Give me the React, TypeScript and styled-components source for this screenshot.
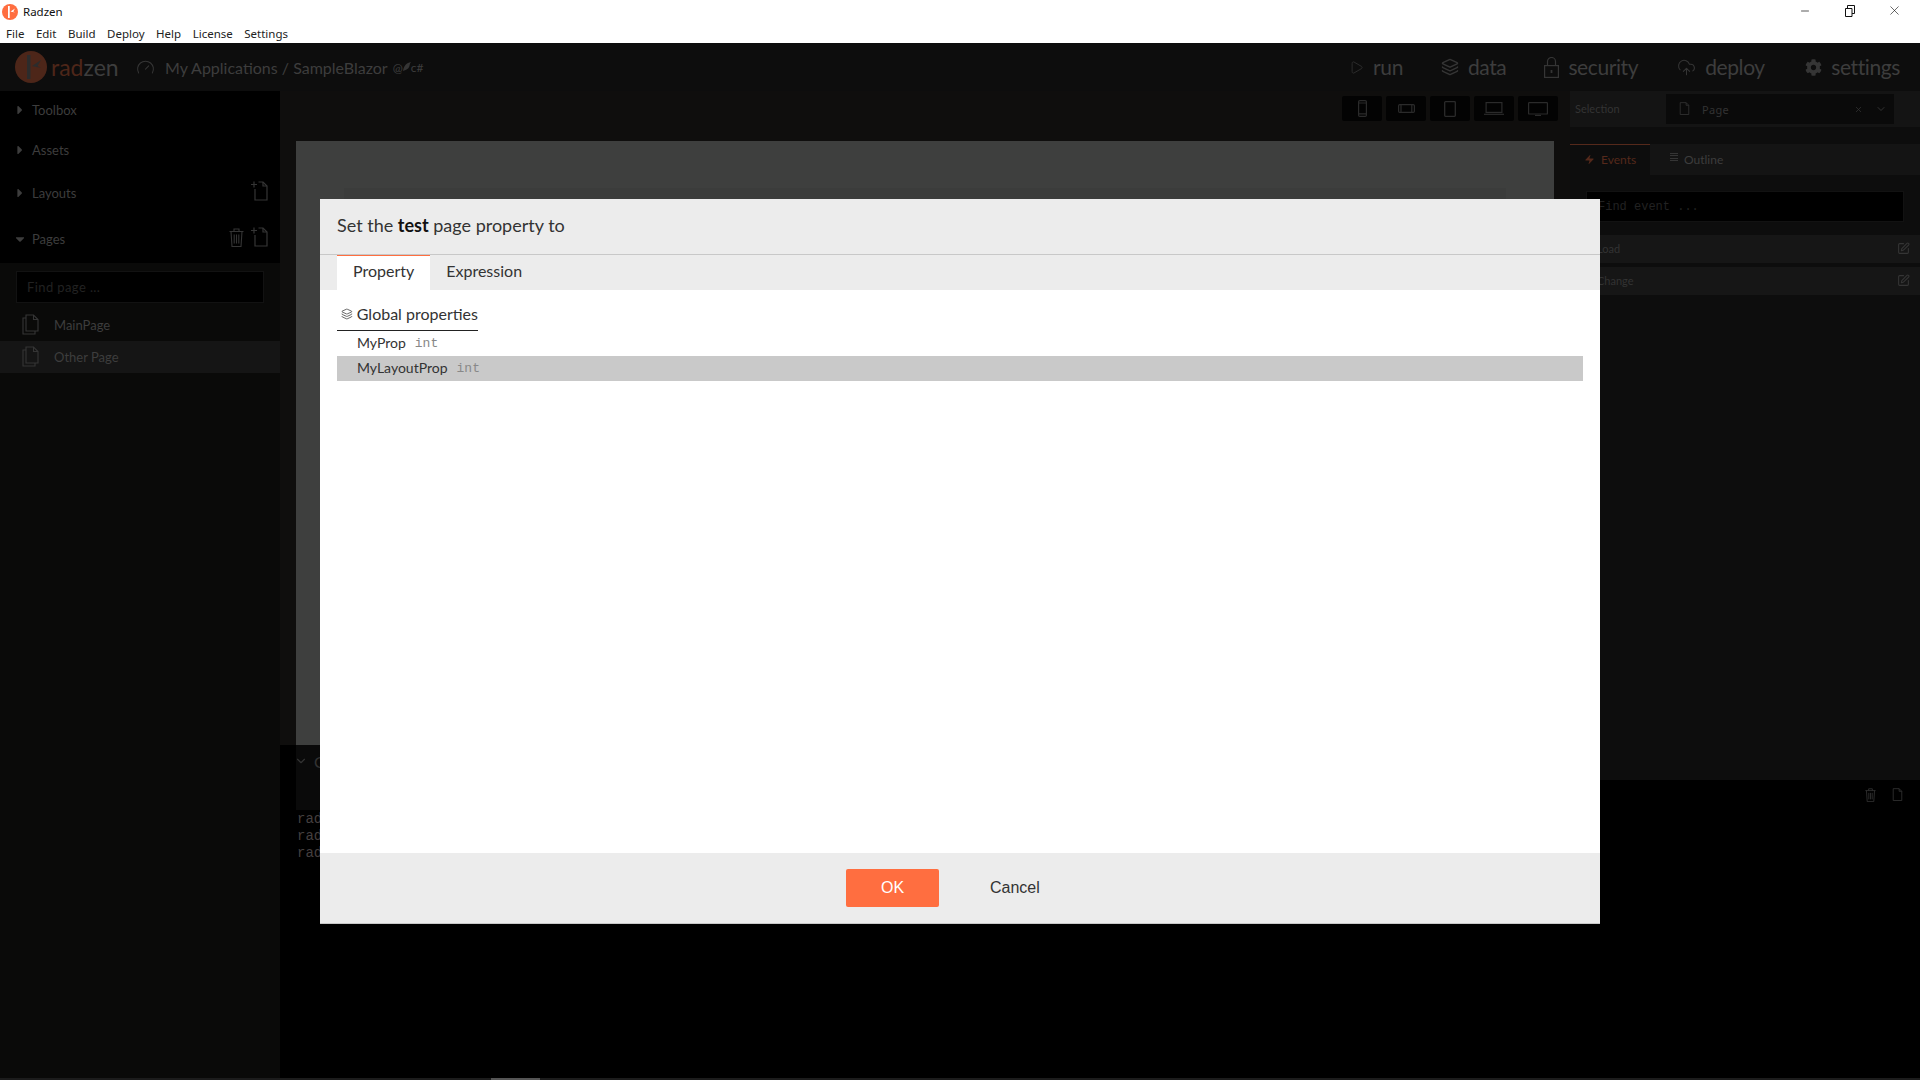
import React from 'react';
import styled, { createGlobalStyle } from 'styled-components';
import { Play, Layers, CloudUpload, Zap, SquarePen, X, ChevronDown, Minus, Gauge } from 'lucide-react';
import { FaCog, FaCaretRight, FaCaretDown } from 'react-icons/fa';

const dimText = '#3d3d3d';
const dimIcon = '#353535';
const deviceIcon = '#2b2b2b';

const GlobalStyle = createGlobalStyle`
  html, body { margin: 0; padding: 0; background: #000; overflow: hidden; }
  * { box-sizing: border-box; }
`;

const FileIcon = ({ size = 16, color = dimIcon }: { size?: number; color?: string }): React.JSX.Element => (
  <svg width={size} height={size * 1.2} viewBox="0 0 16 20" fill="none" stroke={color} strokeWidth="1.2">
    <path d="M1.5 1h9l4 4v14h-13z" />
    <path d="M10.5 1v4h4" />
  </svg>
);

const NewFileIcon = (): React.JSX.Element => (
  <svg width="17" height="20" viewBox="0 0 17 20" fill="none" stroke={dimIcon} strokeWidth="1.2">
    <path d="M0 3.5h6M3 .5v6" />
    <path d="M4 8v11h12V5l-4-4H7.5" />
    <path d="M12 1v4h4" />
  </svg>
);

const TrashIcon = ({ w = 15, h = 19 }: { w?: number; h?: number }): React.JSX.Element => (
  <svg width={w} height={h} viewBox="0 0 15 19" fill="none" stroke={dimIcon} strokeWidth="1.1">
    <path d="M.5 3.5h14M5 3.5V1h5v2.5" />
    <path d="M2 3.5l1 15h9l1-15" />
    <path d="M5.2 6.5v9M7.5 6.5v9M9.8 6.5v9" />
  </svg>
);

const PagesIcon = (): React.JSX.Element => (
  <svg width="17" height="21" viewBox="0 0 17 21" fill="none" stroke={dimIcon} strokeWidth="1.1">
    <path d="M4 1h7.5L16 5.5V17H4z" />
    <path d="M11.5 1v4.5H16" />
    <path d="M4 4H1v16h12v-3" />
  </svg>
);

const LockIcon = (): React.JSX.Element => (
  <svg width="15" height="21" viewBox="0 0 15 21" fill="none" stroke={dimIcon} strokeWidth="1.2">
    <rect x=".6" y="8.6" width="13.8" height="11.8" />
    <path d="M3.5 8.5V4.5a4 4 0 018 0v4" />
    <path d="M7.5 13v3" strokeWidth="1.8" />
  </svg>
);

const RadzenLogo = ({ size, bg, mark }: { size: number; bg: string; mark: string }): React.JSX.Element => (
  <svg width={size} height={size} viewBox="0 0 32 32">
    <circle cx="16" cy="16" r="16" fill={bg} />
    <path d="M12 4h3.5v24H12z" fill={mark} />
    <path d="M17 15l9-6-3.5 6 3.5 2z" fill={mark} />
  </svg>
);

const PhoneIcon = (): React.JSX.Element => (
  <svg width="9" height="17" viewBox="0 0 9 17" fill="none" stroke={deviceIcon} strokeWidth="1.2">
    <rect x=".6" y=".6" width="7.8" height="15.8" rx="1.2" />
    <path d="M.6 3h7.8M.6 13.8h7.8" />
  </svg>
);

const PhoneWideIcon = (): React.JSX.Element => (
  <svg width="17" height="9" viewBox="0 0 17 9" fill="none" stroke={deviceIcon} strokeWidth="1.2">
    <rect x=".6" y=".6" width="15.8" height="7.8" rx="1.2" />
    <path d="M3 .6v7.8M13.8 .6v7.8" />
  </svg>
);

const TabletIcon = (): React.JSX.Element => (
  <svg width="12" height="16" viewBox="0 0 12 16" fill="none" stroke={deviceIcon} strokeWidth="1.3">
    <rect x=".7" y=".7" width="10.6" height="14.6" rx=".8" />
  </svg>
);

const LaptopIcon = (): React.JSX.Element => (
  <svg width="20" height="13" viewBox="0 0 20 13" fill="none" stroke={deviceIcon} strokeWidth="1.2">
    <rect x="2.1" y=".6" width="15.8" height="9.8" />
    <path d="M0 12.3h20" />
  </svg>
);

const MonitorIcon = (): React.JSX.Element => (
  <svg width="20" height="14" viewBox="0 0 20 14" fill="none" stroke={deviceIcon} strokeWidth="1.2">
    <rect x=".6" y=".6" width="18.8" height="11.4" rx=".6" />
    <path d="M7 13.4h6" />
  </svg>
);

const TitleBar = styled.div`
  height: 24px;
  background: #fff;
  display: flex;
  align-items: center;
  padding: 0 3px 0 2px;
  font: 11.5px 'Noto Sans', sans-serif;
  color: #111;
`;

const TitleText = styled.span`
  flex: 1;
  position: relative;
  top: -1px;
  margin-left: 5px;
`;

const WindowButton = styled.div`
  width: 45px;
  height: 24px;
  padding-bottom: 3px;
  display: flex;
  align-items: center;
  justify-content: center;
  color: #111;
`;

const RestoreIcon = (): React.JSX.Element => (
  <svg width="10" height="12" viewBox="0 0 10 12" fill="none" stroke="#111">
    <path d="M.5 3.5h6.5v8H.5zM2.5 3.5V.5h7v8H7" />
  </svg>
);

const MenuBar = styled.div`
  height: 19px;
  background: #fff;
  display: flex;
  align-items: center;
  gap: 11.5px;
  padding: 0 0 1px 6px;
  font: 11.5px 'Noto Sans', sans-serif;
  color: #222;
`;

const Header = styled.div`
  height: 48px;
  background: #0d0d0d;
  display: flex;
  align-items: center;
  padding-left: 15px;
  font-family: Lato, sans-serif;
  color: ${dimText};
`;

const Brand = styled.div`
  display: flex;
  align-items: center;
  gap: 4px;
  font-size: 23px;
  width: 121px;
`;

const BrandAccent = styled.span`
  color: #4d2619;
`;

const Breadcrumb = styled.div`
  display: flex;
  align-items: center;
  gap: 10px;
  font-size: 16px;
  flex: 1;
`;

const TechMark = styled.span`
  display: flex;
  align-items: center;
  font-size: 12px;
  margin-left: -5px;
`;

const HeaderNav = styled.div`
  display: flex;
  align-items: center;
  gap: 38px;
  padding-right: 20px;
`;

const NavItem = styled.div<{ $lead?: number }>`
  display: flex;
  align-items: center;
  gap: 9px;
  margin-left: ${(p) => p.$lead ?? 0}px;
  font-size: 21px;
  line-height: 48px;
  letter-spacing: -0.4px;
`;

const Workspace = styled.div`
  flex: 1;
  display: flex;
  min-height: 0;
`;

const Sidebar = styled.div`
  width: 280px;
  background: #0a0a09;
  font-family: Lato, sans-serif;
  color: ${dimText};
`;

const SidebarTop = styled.div`
  background: #000;
`;

const Section = styled.div<{ $h: number }>`
  height: ${(p) => p.$h}px;
  display: flex;
  align-items: center;
  padding: 0 12px 0 13px;
  gap: 5px;
  font-size: 13px;
`;

const SectionTitle = styled.span`
  flex: 1;
`;

const SectionActions = styled.div`
  display: flex;
  align-items: center;
  gap: 7px;
  margin-top: -4px;
`;

const FindInput = styled.div`
  background: #000;
  border: 1px solid #121212;
  color: #222;
  height: 32px;
  display: flex;
  align-items: center;
`;

const SideFind = styled(FindInput)`
  margin: 8px 16px 6px;
  padding-left: 10px;
  font-size: 13px;
  letter-spacing: 0.4px;
`;

const PageRow = styled.div<{ $active?: boolean }>`
  height: 32px;
  display: flex;
  align-items: center;
  gap: 15px;
  padding: 0 0 1px 22px;
  font-size: 13px;
  background: ${(p) => (p.$active ? '#151515' : 'transparent')};
`;

const Center = styled.div`
  flex: 1;
  display: flex;
  flex-direction: column;
  background: #0f0e0d;
`;

const DeviceBar = styled.div`
  height: 50px;
  display: flex;
  justify-content: flex-end;
  gap: 4px;
  padding: 5px 12px 0 0;
`;

const DeviceButton = styled.div`
  width: 40px;
  height: 25px;
  background: #030303;
  border-radius: 2px;
  display: flex;
  align-items: center;
  justify-content: center;
`;

const Canvas = styled.div`
  height: 604px;
  margin: 0 16px;
  background: #3e3f3e;
  padding: 47px 48px 0;
`;

const CanvasInner = styled.div`
  height: 100%;
  background: #3b3c3b;
`;

const Output = styled.div`
  flex: 1;
  background: #000;
  padding-left: 16px;
`;

const OutputHead = styled.div`
  height: 65px;
  margin-bottom: 1px;
  background: #0a0a0a;
  padding: 7px 0 0;
  display: flex;
  gap: 6px;
  color: #333;
  font: 16px Lato, sans-serif;
`;

const OutputChevron = styled(ChevronDown)`
  margin: 2px 0 0 -2px;
`;

const LogLine = styled.div`
  font: 14px/17px 'Liberation Mono', monospace;
  color: #443f3f;
  padding-left: 1px;
`;

const Inspector = styled.div`
  width: 350px;
  display: flex;
  flex-direction: column;
  font-family: Lato, sans-serif;
  color: ${dimText};
`;

const InspectorMain = styled.div`
  height: 689px;
  background: #0d0d0d;
`;

const SelectionRow = styled.div`
  height: 36px;
  background: #141414;
  display: flex;
  align-items: center;
  padding-left: 5px;
  font-size: 11px;
  color: #333;
`;

const SelectionLabel = styled.span`
  width: 91px;
  padding-bottom: 2px;
`;

const SelectBox = styled.div`
  width: 228px;
  height: 30px;
  background: #0a0a0a;
  display: flex;
  align-items: center;
  gap: 12px;
  padding: 0 7px 0 13px;
  font-family: 'Noto Sans', sans-serif;
`;

const SelectValue = styled.span`
  flex: 1;
  letter-spacing: 0.3px;
`;

const InspectorTabs = styled.div`
  margin-top: 17px;
  height: 31px;
  background: #141414;
  display: flex;
  font-size: 12px;
`;

const InspectorTab = styled.div<{ $active?: boolean }>`
  width: ${(p) => (p.$active ? '80px' : 'auto')};
  display: flex;
  align-items: center;
  gap: 6px;
  padding: 0 0 1px ${(p) => (p.$active ? '14px' : '20px')};
  color: ${(p) => (p.$active ? '#55291b' : dimText)};
  background: ${(p) => (p.$active ? '#0d0d0d' : 'transparent')};
  border-top: ${(p) => (p.$active ? '1px solid #55291b' : 'none')};
`;

const OutlineGlyph = styled.span`
  width: 8px;
  height: 9px;
  margin-top: -4px;
  background: repeating-linear-gradient(${dimIcon} 0 1px, transparent 1px 2.5px);
`;

const EventFind = styled(FindInput)`
  height: 31px;
  margin: 16px 16px 13px;
  padding-left: 11px;
  font: 12px 'Liberation Mono', monospace;
`;

const EventRow = styled.div`
  height: 28px;
  margin: 0 0 4px 16px;
  background: #161616;
  display: flex;
  align-items: center;
  justify-content: space-between;
  padding: 0 10px 1px 11px;
  font-size: 11px;
  color: #333;
`;

const InspectorFoot = styled.div`
  flex: 1;
  background: #000;
  display: flex;
  justify-content: flex-end;
  gap: 16px;
  padding: 8px 17px 0 0;
`;

const ScrollTrack = styled.div`
  height: 2px;
  background: #1c1c1c;
  padding-left: 491px;
`;

const ScrollThumb = styled.div`
  width: 49px;
  height: 2px;
  background: #555;
`;

const Page = styled.div`
  width: 1920px;
  height: 1080px;
  position: relative;
  display: flex;
  flex-direction: column;
  overflow: hidden;
`;

const Modal = styled.div`
  position: absolute;
  left: 320px;
  top: 199px;
  width: 1280px;
  height: 725px;
  background: #fff;
  display: flex;
  flex-direction: column;
  font-family: Lato, sans-serif;
  color: #333;
`;

const ModalTitle = styled.div`
  height: 56px;
  background: #ececec;
  border-bottom: 1px solid #c8c8c8;
  padding: 0 17px 4px;
  display: flex;
  align-items: center;
  font-size: 18px;
  white-space: pre;

  strong {
    color: #111;
  }
`;

const ModalTabs = styled.div`
  height: 35px;
  background: #ececec;
  padding-left: 17px;
  display: flex;
  font-size: 16px;
`;

const ModalTab = styled.div<{ $active?: boolean }>`
  padding: 0 16px ${(p) => (p.$active ? '6px' : '5px')};
  display: flex;
  align-items: center;
  background: ${(p) => (p.$active ? '#fff' : 'transparent')};
  border-top: ${(p) => (p.$active ? '1px solid #ff6e40' : 'none')};
`;

const ModalBody = styled.div`
  flex: 1;
  padding: 11px 17px 0;
`;

const GroupHead = styled.div`
  width: 141px;
  height: 30px;
  border-bottom: 1px solid #222;
  display: flex;
  align-items: center;
  gap: 4px;
  padding: 0 0 4px 4px;
  font-size: 16px;
  white-space: nowrap;
`;

const PropRow = styled.div<{ $selected?: boolean }>`
  height: 25px;
  display: flex;
  align-items: center;
  gap: 9px;
  padding: 0 0 3px 20px;
  font-size: 14px;
  background: ${(p) => (p.$selected ? '#c9c9c9' : 'transparent')};
`;

const PropType = styled.span`
  font: 13px 'Liberation Mono', monospace;
  color: #888;
  margin-top: 2px;
`;

const ModalFoot = styled.div`
  height: 71px;
  background: #ececec;
  border-bottom: 1px solid #c8c8c8;
  padding: 0 0 1px 526px;
  display: flex;
  align-items: center;
  font: 16px 'Liberation Sans', Arial, sans-serif;
`;

const OkButton = styled.div`
  width: 93px;
  height: 38px;
  background: #ff6e40;
  border-radius: 2px;
  color: #fff;
  display: flex;
  align-items: center;
  justify-content: center;
`;

const CancelButton = styled.div`
  margin-left: 51px;
  color: #333;
`;

const menus = ['File', 'Edit', 'Build', 'Deploy', 'Help', 'License', 'Settings'];
const sections = [
  { title: 'Toolbox', h: 38 },
  { title: 'Assets', h: 42 },
];

const App = (): React.JSX.Element => (
  <Page>
    <GlobalStyle />
    <TitleBar>
      <RadzenLogo size={16} bg="#ff6e40" mark="#fff" />
      <TitleText>Radzen</TitleText>
      <WindowButton><Minus size={12} strokeWidth={1.4} /></WindowButton>
      <WindowButton><RestoreIcon /></WindowButton>
      <WindowButton><X size={15} strokeWidth={1} /></WindowButton>
    </TitleBar>
    <MenuBar>
      {menus.map((m) => (
        <span key={m}>{m}</span>
      ))}
    </MenuBar>
    <Header>
      <Brand>
        <RadzenLogo size={32} bg="#4d2619" mark="#2c2c2c" />
        <span><BrandAccent>rad</BrandAccent>zen</span>
      </Brand>
      <Breadcrumb>
        <Gauge size={19} color={dimIcon} strokeWidth={1.3} />
        <span>My Applications / SampleBlazor</span>
        <TechMark>
          @
          <svg width="8" height="10" viewBox="0 0 9 11" fill={dimIcon}><path d="M0 10C1 4 4 1 9 0 7 2 8 5 6 7 4 9 2 9 0 10z" /></svg>
          c#
        </TechMark>
      </Breadcrumb>
      <HeaderNav>
        <NavItem><Play size={15} color={dimIcon} strokeWidth={1.2} />run</NavItem>
        <NavItem><Layers size={18} color={dimIcon} />data</NavItem>
        <NavItem><LockIcon />security</NavItem>
        <NavItem $lead={1}><CloudUpload size={19} color={dimIcon} strokeWidth={1.3} />deploy</NavItem>
        <NavItem $lead={2.5}><FaCog size={17} color={dimIcon} />settings</NavItem>
      </HeaderNav>
    </Header>
    <Workspace>
      <Sidebar>
        <SidebarTop>
          {sections.map((s) => (
            <Section key={s.title} $h={s.h}>
              <FaCaretRight size={14} />
              <SectionTitle>{s.title}</SectionTitle>
            </Section>
          ))}
          <Section $h={44}>
            <FaCaretRight size={14} />
            <SectionTitle>Layouts</SectionTitle>
            <SectionActions><NewFileIcon /></SectionActions>
          </Section>
          <Section $h={48}>
            <FaCaretDown size={14} />
            <SectionTitle>Pages</SectionTitle>
            <SectionActions><TrashIcon /><NewFileIcon /></SectionActions>
          </Section>
        </SidebarTop>
        <SideFind>Find page ...</SideFind>
        <PageRow><PagesIcon />MainPage</PageRow>
        <PageRow $active><PagesIcon />Other Page</PageRow>
      </Sidebar>
      <Center>
        <DeviceBar>
          <DeviceButton><PhoneIcon /></DeviceButton>
          <DeviceButton><PhoneWideIcon /></DeviceButton>
          <DeviceButton><TabletIcon /></DeviceButton>
          <DeviceButton><LaptopIcon /></DeviceButton>
          <DeviceButton><MonitorIcon /></DeviceButton>
        </DeviceBar>
        <Canvas><CanvasInner /></Canvas>
        <Output>
          <OutputHead><OutputChevron size={14} />C</OutputHead>
          <LogLine>radzen</LogLine>
          <LogLine>radzen</LogLine>
          <LogLine>radzen</LogLine>
        </Output>
      </Center>
      <Inspector>
        <InspectorMain>
          <SelectionRow>
            <SelectionLabel>Selection</SelectionLabel>
            <SelectBox>
              <FileIcon size={11} />
              <SelectValue>Page</SelectValue>
              <X size={9} />
              <ChevronDown size={12} />
            </SelectBox>
          </SelectionRow>
          <InspectorTabs>
            <InspectorTab $active><Zap size={11} fill="#55291b" strokeWidth={0} />Events</InspectorTab>
            <InspectorTab><OutlineGlyph />Outline</InspectorTab>
          </InspectorTabs>
          <EventFind>Find event ...</EventFind>
          <EventRow>Load<SquarePen size={13} color={dimIcon} /></EventRow>
          <EventRow>Change<SquarePen size={13} color={dimIcon} /></EventRow>
        </InspectorMain>
        <InspectorFoot>
          <TrashIcon w={11} h={14} />
          <FileIcon size={11} />
        </InspectorFoot>
      </Inspector>
    </Workspace>
    <ScrollTrack><ScrollThumb /></ScrollTrack>
    <Modal>
      <ModalTitle><span>Set the <strong>test</strong> page property to</span></ModalTitle>
      <ModalTabs>
        <ModalTab $active>Property</ModalTab>
        <ModalTab>Expression</ModalTab>
      </ModalTabs>
      <ModalBody>
        <GroupHead><Layers size={12} strokeWidth={1.5} />Global properties</GroupHead>
        <PropRow>MyProp <PropType>int</PropType></PropRow>
        <PropRow $selected>MyLayoutProp <PropType>int</PropType></PropRow>
      </ModalBody>
      <ModalFoot>
        <OkButton>OK</OkButton>
        <CancelButton>Cancel</CancelButton>
      </ModalFoot>
    </Modal>
  </Page>
);

export default App;
